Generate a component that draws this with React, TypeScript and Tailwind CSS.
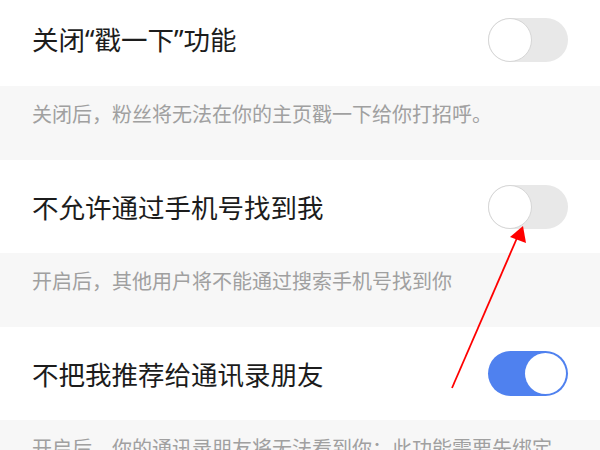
import React from "react";

const font = { fontFamily: '"Noto Sans CJK SC", "Noto Sans", sans-serif' };
const latin = { fontFamily: '"Noto Sans", "Noto Sans CJK SC", sans-serif' };

function Switch({ on }: { on: boolean }) {
  if (on) {
    return (
      <div className="w-[80px] h-[45px] rounded-full bg-[#4f81ef] p-[2px] flex justify-end shrink-0">
        <div className="w-[41px] h-[41px] rounded-full bg-white" />
      </div>
    );
  }
  return (
    <div className="w-[80px] h-[44px] rounded-full bg-[#e8e8e8] flex justify-start shrink-0">
      <div className="w-[44px] h-[44px] rounded-full bg-white border-[1.5px] border-[#d6d6d6]" />
    </div>
  );
}

function Row({ children, on, first }: { children: React.ReactNode; on: boolean; first?: boolean }) {
  return (
    <div
      className={
        "h-[93px] bg-white flex items-center justify-between pl-[32px] pr-[32px] " +
        (first ? "-mt-[7px]" : "")
      }
    >
      <span className="text-[26.5px] leading-[34px] text-[#1c1c1c] whitespace-nowrap">{children}</span>
      <Switch on={on} />
    </div>
  );
}

function Desc({ text }: { text: string }) {
  return (
    <div className="h-[74px] bg-[#f7f7f7] pl-[32px] pr-[40px] pt-[14px]">
      <p className="text-[20px] leading-[28px] text-[#a0a0a0]">{text}</p>
    </div>
  );
}

export default function App() {
  return (
    <div className="relative w-[600px] h-[450px] overflow-hidden bg-[#f7f7f7]" style={font}>
      <Row first on={false}>
        关闭<span style={latin}>“</span>戳一下<span style={latin}>”</span>功能
      </Row>
      <Desc text="关闭后，粉丝将无法在你的主页戳一下给你打招呼。" />
      <Row on={false}>不允许通过手机号找到我</Row>
      <Desc text="开启后，其他用户将不能通过搜索手机号找到你" />
      <Row on={true}>不把我推荐给通讯录朋友</Row>
      <Desc text="开启后，你的通讯录朋友将无法看到你：此功能需要先绑定手机号" />
      <svg className="absolute left-0 top-0" width="600" height="450" viewBox="0 0 600 450">
        <line x1="452" y1="388" x2="517" y2="238" stroke="#ff0000" strokeWidth="1.8" />
        <polygon points="523,226 510,237 526,243" fill="#ff0000" />
      </svg>
    </div>
  );
}
